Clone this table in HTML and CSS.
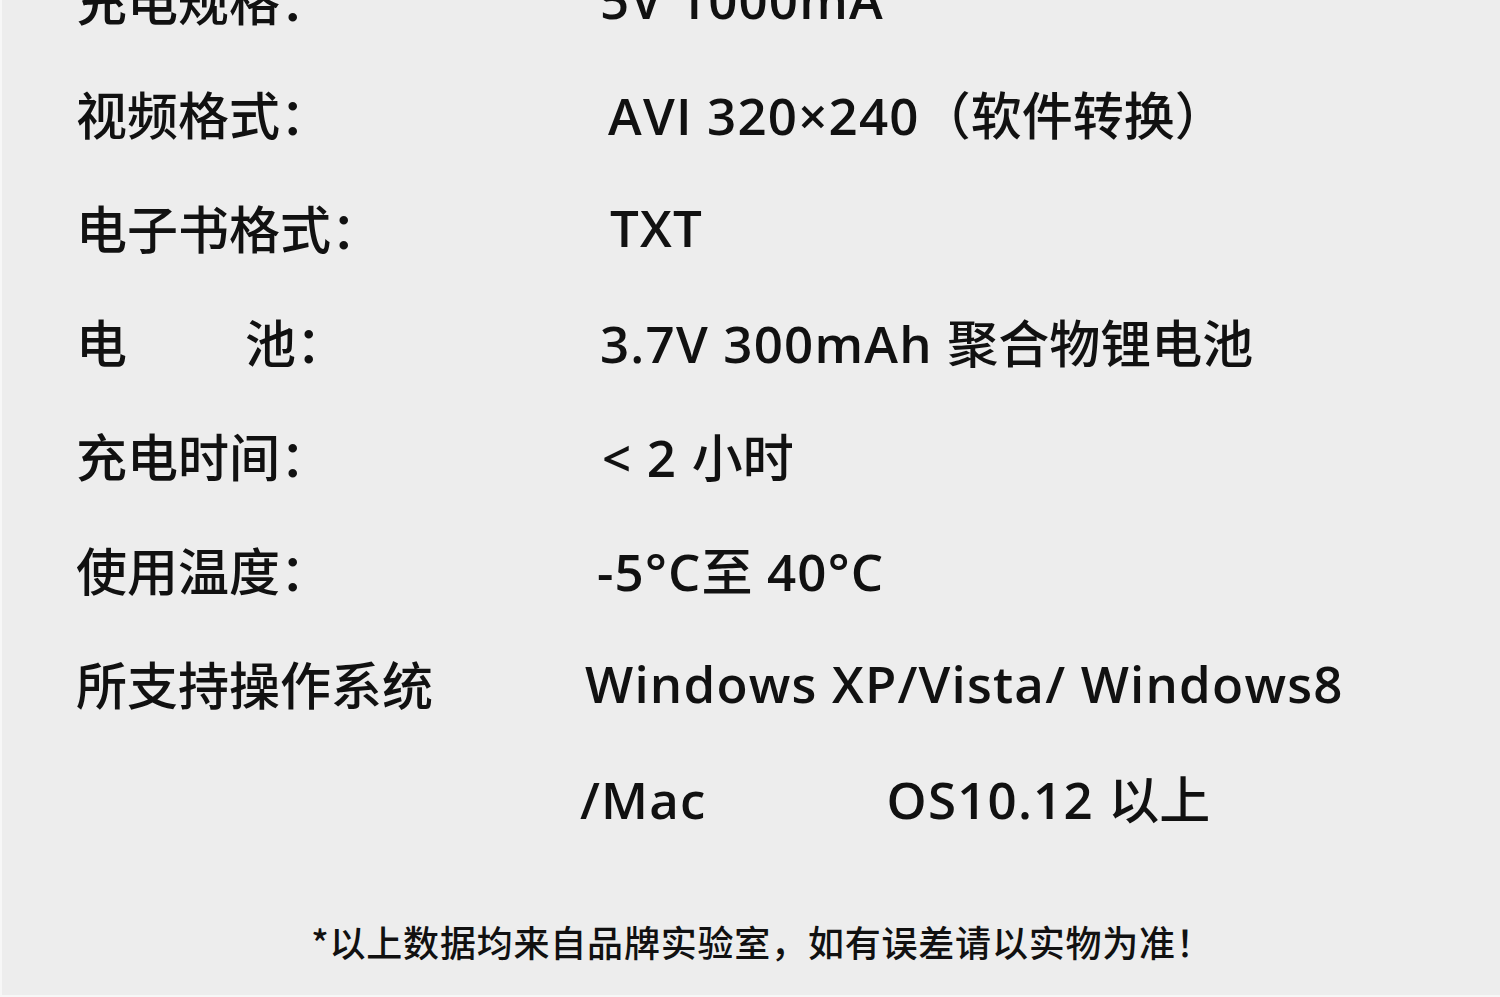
FILE: index.html
```html
<!DOCTYPE html>
<html lang="zh-CN">
<head>
    <meta charset="UTF-8">
    <meta name="viewport" content="width=device-width, initial-scale=1.0">
    <title>产品参数</title>
    <link rel="stylesheet" href="styles.css">
</head>
<body>
    <div class="sheet">
        <div class="specs">
            <div class="row">
                <span class="label">充电规格：</span>
                <span class="value v-charge">5V 1000mA</span>
            </div>
            <div class="row">
                <span class="label">视频格式：</span>
                <span class="value v-video">AVI 320×240<span class="cjk">（软件转换）</span></span>
            </div>
            <div class="row">
                <span class="label">电子书格式：</span>
                <span class="value v-ebook">TXT</span>
            </div>
            <div class="row">
                <span class="label">电<span class="gap"></span>池：</span>
                <span class="value v-battery">3.7V 300mAh <span class="cjk">聚合物锂电池</span></span>
            </div>
            <div class="row">
                <span class="label">充电时间：</span>
                <span class="value v-time">&lt; 2 <span class="cjk">小时</span></span>
            </div>
            <div class="row">
                <span class="label">使用温度：</span>
                <span class="value v-temp">-5°C<span class="cjk">至</span> 40°C</span>
            </div>
            <div class="row">
                <span class="label">所支持操作系统</span>
                <span class="value v-os">Windows XP/Vista/ Windows8</span>
            </div>
            <div class="row">
                <span class="label"></span>
                <span class="value v-mac">/Mac<span class="mac-gap"></span>OS10.12 <span class="cjk">以上</span></span>
            </div>
        </div>
        <p class="note">*以上数据均来自品牌实验室，如有误差请以实物为准！</p>
    </div>
</body>
</html>
```

FILE: styles.css
```css
html, body {
    margin: 0;
    padding: 0;
}

body {
    background: #f7f7f7;
    font-family: "Noto Sans CJK SC", "Noto Sans", sans-serif;
    color: #111111;
    height: 997px;
    overflow: hidden;
}

.sheet {
    background: #ededed;
    margin-left: 2px;
    height: 995px;
    overflow: hidden;
}

.specs {
    margin-top: -58px;
}

.row {
    display: flex;
    height: 114px;
    line-height: 114px;
    font-size: 51px;
    font-weight: 500;
    white-space: nowrap;
}

.label {
    box-sizing: border-box;
    width: 522px;
    padding-left: 74px;
    flex-shrink: 0;
}

.gap {
    display: inline-block;
    width: 118px;
}

.value {
    flex: 1;
    font-family: "Open Sans", "Noto Sans CJK SC", sans-serif;
    font-weight: 600;
    letter-spacing: 1.2px;
}

.cjk {
    font-family: "Noto Sans CJK SC", sans-serif;
    font-weight: 500;
    letter-spacing: 0;
}

.v-charge { padding-left: 76px; }
.v-video { padding-left: 84px; }
.v-ebook { padding-left: 86px; }
.v-battery { padding-left: 76px; }
.v-time { padding-left: 78px; }
.v-temp { padding-left: 73px; }
.v-os { padding-left: 61px; }
.v-mac { padding-left: 56px; }

.mac-gap {
    display: inline-block;
    width: 180px;
}

.note {
    margin: 62px 0 0;
    text-align: center;
    font-size: 36px;
    font-weight: 500;
    line-height: 50px;
    letter-spacing: 0.8px;
    padding-left: 22px;
}
```
